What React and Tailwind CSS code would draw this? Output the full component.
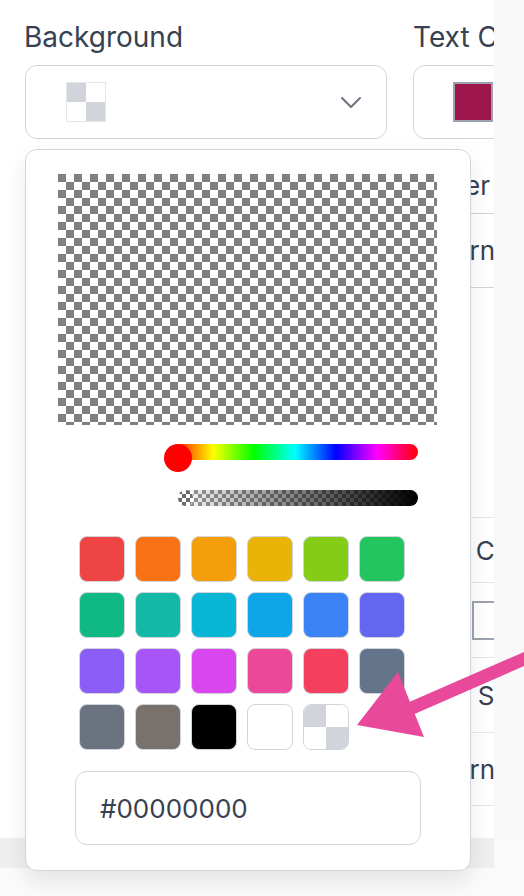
import React from 'react';

const swatches = [
  ['#ef4444', '#f97316', '#f59e0b', '#eab308', '#84cc16', '#22c55e'],
  ['#10b981', '#14b8a6', '#06b6d4', '#0ea5e9', '#3b82f6', '#6366f1'],
  ['#8b5cf6', '#a855f7', '#d946ef', '#ec4899', '#f43f5e', '#64748b'],
  ['#6b7280', '#78716c', '#000000', '#ffffff', 'transparent'],
];

const TransparentIcon = ({ size }) => (
  <div className={`grid grid-cols-2 grid-rows-2 overflow-hidden ${size}`}>
    <div className="bg-[#d1d5db]" />
    <div className="bg-white" />
    <div className="bg-white" />
    <div className="bg-[#d1d5db]" />
  </div>
);

const Chevron = () => (
  <svg width="22" height="13" viewBox="0 0 22 13" fill="none">
    <path d="M2 2l9 9 9-9" stroke="#6b7280" strokeWidth="2" strokeLinecap="round" strokeLinejoin="round" />
  </svg>
);

const ColorPopover = () => (
  <div className="absolute left-[25px] top-[149px] w-[446px] h-[722px] rounded-[12px] border border-[#d1d5db] bg-white shadow-[0_10px_22px_rgba(0,0,0,0.09)]">
    {/* saturation area, fully transparent */}
    <div className="ml-[32px] mt-[24px] w-[379px] h-[251px] bg-[image:conic-gradient(#ffffff_0_25%,#808080_0_50%,#ffffff_0_75%,#808080_0)] bg-[length:16px_16px]" />

    {/* hue slider */}
    <div className="relative ml-[138px] mt-[19px] w-[254px] h-[28px]">
      <div className="ml-[8px] mt-[6px] h-[16px] rounded-full bg-[linear-gradient(to_right,#ff0000,#ffff00,#00ff00,#00ffff,#0000ff,#ff00ff,#ff0000)]" />
      <div className="absolute left-0 top-0 w-[28px] h-[28px] rounded-full bg-[#ff0000]" />
    </div>

    {/* alpha slider */}
    <div className="relative ml-[152px] mt-[18px] w-[240px] h-[16px] rounded-full overflow-hidden bg-[image:conic-gradient(#ffffff_0_25%,#9a9a9a_0_50%,#ffffff_0_75%,#9a9a9a_0)] bg-[length:8px_8px]">
      <div className="h-full w-full bg-[linear-gradient(to_right,rgba(0,0,0,0),#000000)]" />
      <div className="absolute left-0 top-0 w-[16px] h-[16px] rounded-full border-r border-white bg-[image:conic-gradient(#ffffff_0_25%,#6b6b6b_0_50%,#ffffff_0_75%,#6b6b6b_0)] bg-[length:8px_8px]" />
    </div>

    {/* preset swatches */}
    <div className="ml-[53px] mt-[30px] grid grid-cols-[repeat(6,46px)] gap-[10px]">
      {swatches.flat().map((c, i) =>
        c === 'transparent' ? (
          <div key={i} className="w-[46px] h-[46px] rounded-[8px] border border-[#d1d5db] overflow-hidden">
            <TransparentIcon size="w-full h-full" />
          </div>
        ) : (
          <div
            key={i}
            className="w-[46px] h-[46px] rounded-[8px] border border-[#d1d5db]"
            style={{ backgroundColor: c }}
          />
        )
      )}
    </div>

    {/* hex input */}
    <div className="ml-[49px] mt-[21px] w-[346px] h-[74px] rounded-[12px] border border-[#d1d5db] flex items-center pl-[24px] text-[26px] text-[#374151]">
      #00000000
    </div>
  </div>
);

const Arrow = () => (
  <svg className="absolute left-0 top-0 pointer-events-none" width="524" height="896" viewBox="0 0 524 896">
    <line x1="405" y1="711" x2="540" y2="652" stroke="#e8499b" strokeWidth="13" />
    <polygon points="357,725 398,672 424,737" fill="#e8499b" />
  </svg>
);

export default function App() {
  return (
    <div className="relative w-[524px] h-[896px] overflow-hidden bg-[#fafafa] font-['Inter',sans-serif] text-[#374151]">
      <div className="flex">
        <div className="w-[494px] h-[838px] shrink-0 overflow-hidden bg-white flex gap-[26px] pl-[24px]">
          {/* Background column */}
          <div className="w-[363px] shrink-0">
            <div className="pt-[20px] text-[28px] leading-[34px]">Background</div>
            <div className="mt-[11px] ml-px h-[74px] w-[362px] rounded-[12px] border border-[#d1d5db] flex items-center pl-[40px] pr-[24px] justify-between">
              <div className="border border-[#e5e7eb]">
                <TransparentIcon size="w-[38px] h-[38px]" />
              </div>
              <Chevron />
            </div>
          </div>

          {/* Text colour column, mostly under the popover */}
          <div className="w-[220px] shrink-0">
            <div className="pt-[20px] text-[28px] leading-[34px] whitespace-nowrap">Text Color</div>
            <div className="mt-[11px] h-[74px] rounded-[12px] border border-[#d1d5db] flex items-center pl-[39px]">
              <div className="w-[40px] h-[40px] border-2 border-[#9ca3af] bg-[#9d174d]" />
            </div>
            <div className="h-[74px] w-[77px] pt-[30px] flex justify-end text-[26px] leading-[34px] whitespace-nowrap">Border</div>
            <div className="h-[75px] border-y border-[#d1d5db]">
              <div className="h-full w-[82px] flex items-center justify-end text-[26px] whitespace-nowrap">Pattern</div>
            </div>
            <div className="h-[229px]" />
            <div className="h-[66px] border-y border-[#e5e7eb] flex items-center pl-[3px] text-[26px] whitespace-nowrap">Text Color</div>
            <div className="h-[75px] border-b border-[#e5e7eb] flex items-center pl-[59px]">
              <div className="w-[40px] h-[39px] border-2 border-[#9ca3af] bg-white" />
            </div>
            <div className="h-[75px] border-b border-[#e5e7eb] flex items-center pl-[5px] text-[26px] whitespace-nowrap">Text Size</div>
            <div className="h-[73px] border-b border-[#e5e7eb]">
              <div className="h-full w-[82px] flex items-center justify-end text-[26px] whitespace-nowrap">Pattern</div>
            </div>
          </div>
        </div>
        <div className="flex-1 h-[838px] bg-[#f8f8f8]" />
      </div>
      <div className="w-[494px] h-[30px] bg-[#efefef]" />

      <ColorPopover />
      <Arrow />
    </div>
  );
}
